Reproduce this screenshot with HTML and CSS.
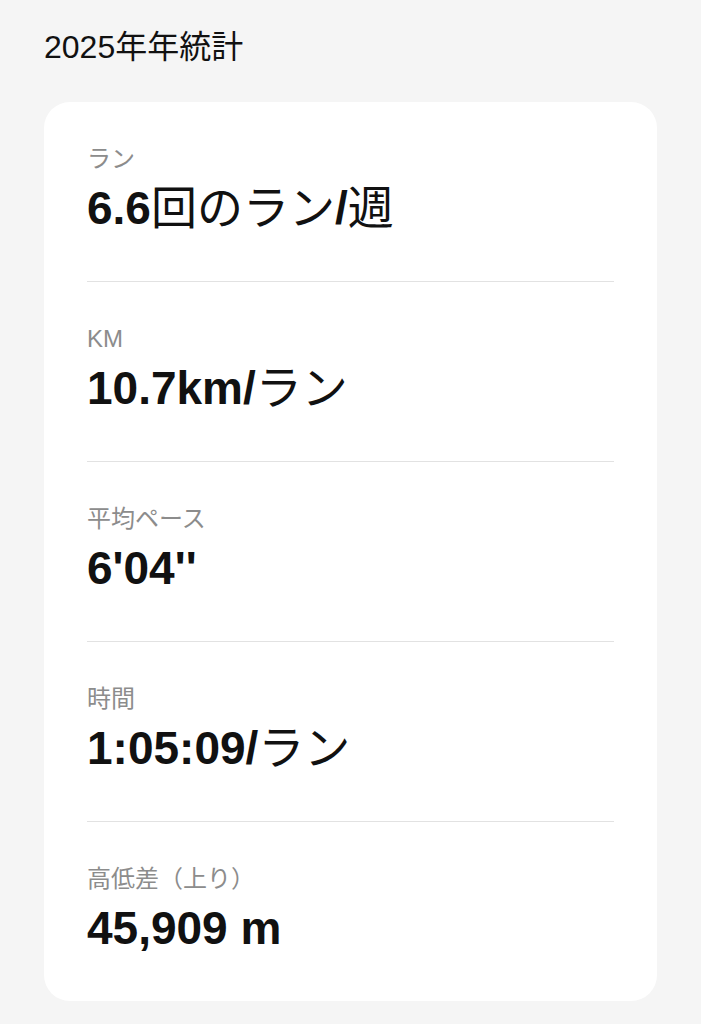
FILE: index.html
```html
<!DOCTYPE html>
<html lang="ja">
<head>
<meta charset="utf-8">
<title>2025年年統計</title>
<link rel="stylesheet" href="styles.css">
</head>
<body>
<main class="page">
  <h1 class="title">2025年年統計</h1>
  <section class="card">
    <div class="row">
      <div class="label">ラン</div>
      <div class="value">6.6<span class="jp">回のラン</span>/<span class="jp">週</span></div>
    </div>
    <div class="row">
      <div class="label">KM</div>
      <div class="value">10.7km/<span class="jp">ラン</span></div>
    </div>
    <div class="row">
      <div class="label">平均ペース</div>
      <div class="value">6'04''</div>
    </div>
    <div class="row">
      <div class="label">時間</div>
      <div class="value">1:05:09/<span class="jp">ラン</span></div>
    </div>
    <div class="row">
      <div class="label">高低差（上り）</div>
      <div class="value">45,909 m</div>
    </div>
  </section>
</main>
</body>
</html>
```

FILE: styles.css
```css
html, body {
  margin: 0;
  padding: 0;
  background: #f5f5f5;
}

body {
  font-family: "Liberation Sans", "Noto Sans CJK JP", sans-serif;
  color: #111111;
}

.page {
  padding: 28px 44px 23px 44px;
}

.title {
  margin: 0 0 36px 0;
  font-size: 32px;
  line-height: 38px;
  font-weight: 400;
  color: #111111;
}

.card {
  background: #ffffff;
  border-radius: 26px;
  padding: 0 43px;
}

.row {
  display: flex;
  flex-direction: column;
  gap: 7px;
  padding: 42px 0 46px 0;
  border-bottom: 1px solid #e2e2e2;
}

.row:last-child {
  border-bottom: none;
}

.label {
  font-size: 24px;
  line-height: 30px;
  color: #8c8c8c;
  font-weight: 400;
}

.value {
  font-size: 46px;
  line-height: 54px;
  font-weight: 700;
  color: #111111;
}

.value .jp {
  font-weight: 400;
}
```
